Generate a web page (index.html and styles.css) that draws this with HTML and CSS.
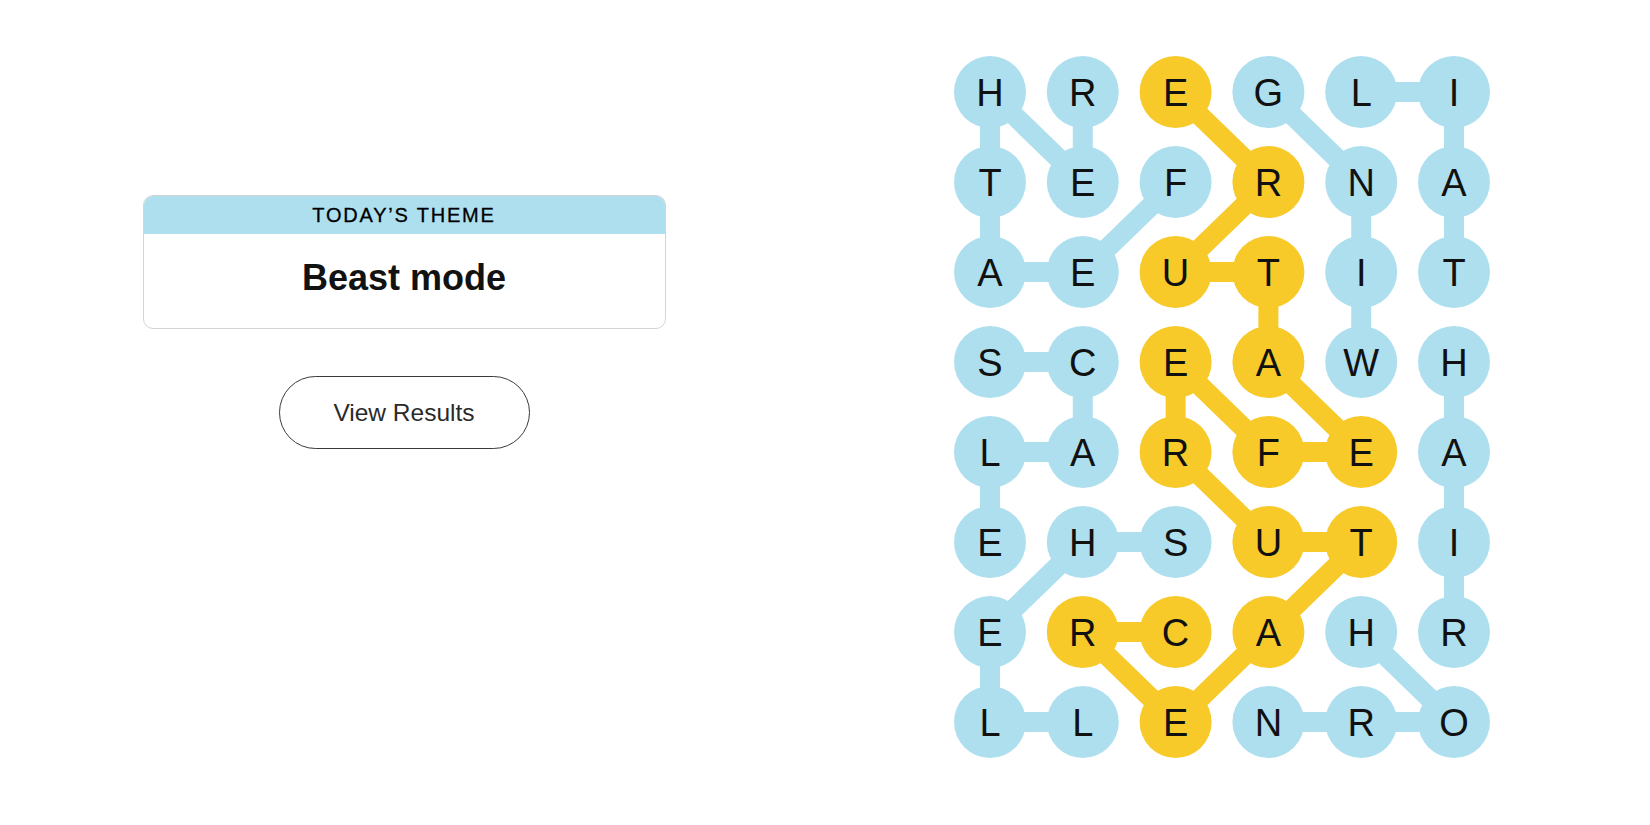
FILE: index.html
```html
<!DOCTYPE html>
<html lang="en">
<head>
<meta charset="utf-8">
<title>Strands</title>
<link rel="stylesheet" href="styles.css">
</head>
<body>
<main class="page">
  <section class="left">
    <div class="theme-card">
      <div class="theme-head">TODAY’S THEME</div>
      <div class="theme-body"><h1 class="theme-title">Beast mode</h1></div>
    </div>
    <button class="results-btn" type="button">View Results</button>
  </section>
  <section class="board-wrap">
    <svg class="board" width="560" height="730" viewBox="0 0 560 730" xmlns="http://www.w3.org/2000/svg">
      <g class="link blue">
        <polyline points="235.6,142 142.8,232 50,232 50,142 50,52 142.8,142 142.8,52"/>
        <polyline points="421.2,322 421.2,232 421.2,142 328.4,52"/>
        <polyline points="514,232 514,142 514,52 421.2,52"/>
        <polyline points="514,322 514,412 514,502 514,592"/>
        <polyline points="421.2,592 514,682 421.2,682 328.4,682"/>
        <polyline points="50,322 142.8,322 142.8,412 50,412 50,502"/>
        <polyline points="235.6,502 142.8,502 50,592 50,682 142.8,682"/>
      </g>
      <g class="link gold">
        <polyline points="235.6,592 142.8,592 235.6,682 328.4,592 421.2,502 328.4,502 235.6,412 235.6,322 328.4,412 421.2,412 328.4,322 328.4,232 235.6,232 328.4,142 235.6,52"/>
      </g>
      <g class="cells">
        <g class="cell blue"><circle cx="50" cy="52" r="36"/><text x="50" y="65.5">H</text></g>
        <g class="cell blue"><circle cx="142.8" cy="52" r="36"/><text x="142.8" y="65.5">R</text></g>
        <g class="cell gold"><circle cx="235.6" cy="52" r="36"/><text x="235.6" y="65.5">E</text></g>
        <g class="cell blue"><circle cx="328.4" cy="52" r="36"/><text x="328.4" y="65.5">G</text></g>
        <g class="cell blue"><circle cx="421.2" cy="52" r="36"/><text x="421.2" y="65.5">L</text></g>
        <g class="cell blue"><circle cx="514" cy="52" r="36"/><text x="514" y="65.5">I</text></g>

        <g class="cell blue"><circle cx="50" cy="142" r="36"/><text x="50" y="155.5">T</text></g>
        <g class="cell blue"><circle cx="142.8" cy="142" r="36"/><text x="142.8" y="155.5">E</text></g>
        <g class="cell blue"><circle cx="235.6" cy="142" r="36"/><text x="235.6" y="155.5">F</text></g>
        <g class="cell gold"><circle cx="328.4" cy="142" r="36"/><text x="328.4" y="155.5">R</text></g>
        <g class="cell blue"><circle cx="421.2" cy="142" r="36"/><text x="421.2" y="155.5">N</text></g>
        <g class="cell blue"><circle cx="514" cy="142" r="36"/><text x="514" y="155.5">A</text></g>

        <g class="cell blue"><circle cx="50" cy="232" r="36"/><text x="50" y="245.5">A</text></g>
        <g class="cell blue"><circle cx="142.8" cy="232" r="36"/><text x="142.8" y="245.5">E</text></g>
        <g class="cell gold"><circle cx="235.6" cy="232" r="36"/><text x="235.6" y="245.5">U</text></g>
        <g class="cell gold"><circle cx="328.4" cy="232" r="36"/><text x="328.4" y="245.5">T</text></g>
        <g class="cell blue"><circle cx="421.2" cy="232" r="36"/><text x="421.2" y="245.5">I</text></g>
        <g class="cell blue"><circle cx="514" cy="232" r="36"/><text x="514" y="245.5">T</text></g>

        <g class="cell blue"><circle cx="50" cy="322" r="36"/><text x="50" y="335.5">S</text></g>
        <g class="cell blue"><circle cx="142.8" cy="322" r="36"/><text x="142.8" y="335.5">C</text></g>
        <g class="cell gold"><circle cx="235.6" cy="322" r="36"/><text x="235.6" y="335.5">E</text></g>
        <g class="cell gold"><circle cx="328.4" cy="322" r="36"/><text x="328.4" y="335.5">A</text></g>
        <g class="cell blue"><circle cx="421.2" cy="322" r="36"/><text x="421.2" y="335.5">W</text></g>
        <g class="cell blue"><circle cx="514" cy="322" r="36"/><text x="514" y="335.5">H</text></g>

        <g class="cell blue"><circle cx="50" cy="412" r="36"/><text x="50" y="425.5">L</text></g>
        <g class="cell blue"><circle cx="142.8" cy="412" r="36"/><text x="142.8" y="425.5">A</text></g>
        <g class="cell gold"><circle cx="235.6" cy="412" r="36"/><text x="235.6" y="425.5">R</text></g>
        <g class="cell gold"><circle cx="328.4" cy="412" r="36"/><text x="328.4" y="425.5">F</text></g>
        <g class="cell gold"><circle cx="421.2" cy="412" r="36"/><text x="421.2" y="425.5">E</text></g>
        <g class="cell blue"><circle cx="514" cy="412" r="36"/><text x="514" y="425.5">A</text></g>

        <g class="cell blue"><circle cx="50" cy="502" r="36"/><text x="50" y="515.5">E</text></g>
        <g class="cell blue"><circle cx="142.8" cy="502" r="36"/><text x="142.8" y="515.5">H</text></g>
        <g class="cell blue"><circle cx="235.6" cy="502" r="36"/><text x="235.6" y="515.5">S</text></g>
        <g class="cell gold"><circle cx="328.4" cy="502" r="36"/><text x="328.4" y="515.5">U</text></g>
        <g class="cell gold"><circle cx="421.2" cy="502" r="36"/><text x="421.2" y="515.5">T</text></g>
        <g class="cell blue"><circle cx="514" cy="502" r="36"/><text x="514" y="515.5">I</text></g>

        <g class="cell blue"><circle cx="50" cy="592" r="36"/><text x="50" y="605.5">E</text></g>
        <g class="cell gold"><circle cx="142.8" cy="592" r="36"/><text x="142.8" y="605.5">R</text></g>
        <g class="cell gold"><circle cx="235.6" cy="592" r="36"/><text x="235.6" y="605.5">C</text></g>
        <g class="cell gold"><circle cx="328.4" cy="592" r="36"/><text x="328.4" y="605.5">A</text></g>
        <g class="cell blue"><circle cx="421.2" cy="592" r="36"/><text x="421.2" y="605.5">H</text></g>
        <g class="cell blue"><circle cx="514" cy="592" r="36"/><text x="514" y="605.5">R</text></g>

        <g class="cell blue"><circle cx="50" cy="682" r="36"/><text x="50" y="695.5">L</text></g>
        <g class="cell blue"><circle cx="142.8" cy="682" r="36"/><text x="142.8" y="695.5">L</text></g>
        <g class="cell gold"><circle cx="235.6" cy="682" r="36"/><text x="235.6" y="695.5">E</text></g>
        <g class="cell blue"><circle cx="328.4" cy="682" r="36"/><text x="328.4" y="695.5">N</text></g>
        <g class="cell blue"><circle cx="421.2" cy="682" r="36"/><text x="421.2" y="695.5">R</text></g>
        <g class="cell blue"><circle cx="514" cy="682" r="36"/><text x="514" y="695.5">O</text></g>
      </g>
    </svg>
  </section>
</main>
</body>
</html>
```
FILE: styles.css
```css
html, body {
  margin: 0;
  padding: 0;
  background: #ffffff;
}

body {
  font-family: "Liberation Sans", Arial, sans-serif;
  color: #121212;
}

.page {
  display: flex;
  align-items: flex-start;
  width: 1650px;
  height: 825px;
  overflow: hidden;
}

.left {
  width: 808px;
  padding-top: 195px;
  display: flex;
  flex-direction: column;
  align-items: center;
  flex-shrink: 0;
}

.theme-card {
  width: 523px;
  box-sizing: border-box;
  border: 1px solid #d4d4d4;
  border-radius: 10px;
  overflow: hidden;
  background: #ffffff;
}

.theme-head {
  height: 39px;
  margin: -1px -1px 0;
  background: #aedfee;
  display: flex;
  align-items: center;
  justify-content: center;
  font-size: 20px;
  letter-spacing: 1.8px;
  color: #000000;
  padding-top: 1px;
  box-sizing: border-box;
  -webkit-text-stroke: 0.3px #000000;
}

.theme-body {
  height: 94px;
  display: flex;
  align-items: center;
  justify-content: center;
  padding-bottom: 6px;
  box-sizing: border-box;
}

.theme-title {
  margin: 0;
  font-size: 36px;
  font-weight: 700;
  color: #121212;
  line-height: 1;
}

.results-btn {
  margin-top: 47px;
  width: 251px;
  height: 73px;
  border: 1px solid #3a3a3a;
  border-radius: 37px;
  background: #ffffff;
  font-family: "Liberation Sans", Arial, sans-serif;
  font-size: 24.5px;
  color: #2a2a2a;
  padding: 0;
}

.board-wrap {
  margin-left: 132px;
  margin-top: 40px;
  flex-shrink: 0;
}

.board {
  display: block;
}

.link polyline {
  fill: none;
  stroke-width: 20;
  stroke-linejoin: round;
  stroke-linecap: round;
}

.link.blue polyline {
  stroke: #aedfee;
}

.link.gold polyline {
  stroke: #f7ca2a;
}

.cell.blue circle {
  fill: #aedfee;
}

.cell.gold circle {
  fill: #f7ca2a;
}

.cell text {
  font-family: "Liberation Sans", Arial, sans-serif;
  font-size: 38px;
  fill: #111111;
  text-anchor: middle;
}
```
